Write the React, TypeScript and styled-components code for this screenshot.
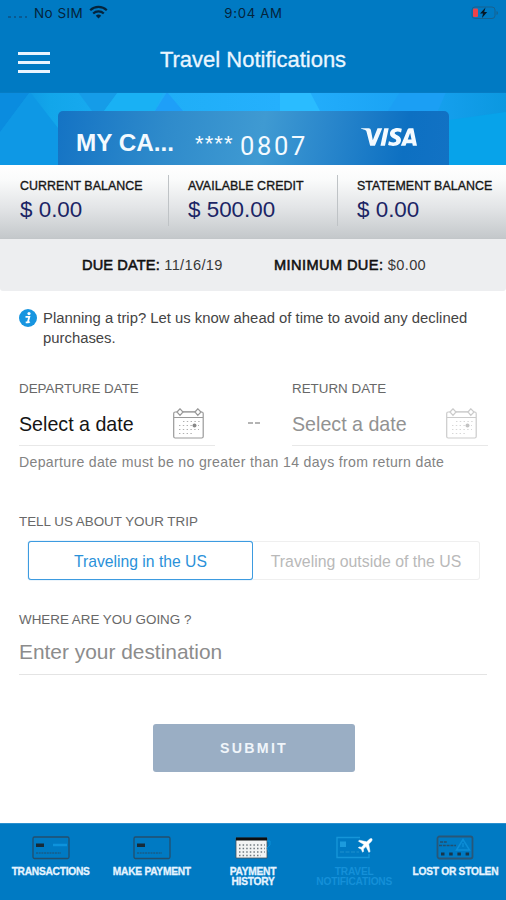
import React from 'react';
import styled, { createGlobalStyle } from 'styled-components';
import { SiVisa } from 'react-icons/si';

const GlobalStyle = createGlobalStyle`
  * { box-sizing: border-box; }
  body { margin: 0; background: #fff; font-family: "Liberation Sans", Arial, sans-serif; }
  button, input { font-family: inherit; }
`;

const Screen = styled.main`
  display: flex;
  flex-direction: column;
  width: 506px;
  height: 900px;
  overflow: hidden;
  background: #fff;
`;

const StatusBar = styled.div`
  display: grid;
  grid-template-columns: 1fr auto 1fr;
  align-items: center;
  height: 26px;
  flex: none;
  padding: 0 7px 0 8px;
  background: #007ac3;
  color: #04243c;
  font-family: Inter, sans-serif;
  font-size: 13px;
`;

const Carrier = styled.div`
  display: flex;
  align-items: center;
  font-size: 13.5px;
  letter-spacing: 0.45px;
  svg { margin-left: 6px; margin-top: -2px; }
`;

const Signal = styled.span`
  display: flex;
  gap: 3px;
  width: 26px;
  padding-top: 7px;
  i { width: 2.5px; height: 2px; background: #0a5a92; }
`;

const Clock = styled.div`
  font-size: 13.2px;
  letter-spacing: 0.7px;
`;

const Battery = styled.div`
  display: flex;
  justify-content: flex-end;
`;

const Header = styled.header`
  display: grid;
  grid-template-columns: 60px 1fr 60px;
  align-items: center;
  height: 66px;
  flex: none;
  background: #007ac3;
`;

const MenuButton = styled.button`
  display: flex;
  flex-direction: column;
  gap: 6px;
  width: 32px;
  margin: 6px 0 0 18px;
  padding: 0;
  border: 0;
  background: none;
  span { height: 3px; background: #e9f5ff; }
`;

const Title = styled.h1`
  margin: 1px 0 0;
  color: #eaf6ff;
  font-size: 22px;
  font-weight: 400;
  text-align: center;
  -webkit-text-stroke: 0.3px #eaf6ff;
`;

const Banner = styled.section`
  display: grid;
  height: 73px;
  flex: none;
  overflow: hidden;
  > * { grid-area: 1 / 1; }
`;

const CardTile = styled.div`
  display: flex;
  width: 391px;
  height: 54px;
  margin: 19px 0 0 58px;
  padding-left: 18px;
  border-radius: 5px 5px 0 0;
  background: linear-gradient(100deg, #1473c4 0%, #2f8bcb 28%, #3f9ad2 52%, #2a87cc 68%, #0d70c2 88%, #1272c4 100%);
  color: #f3faff;
`;

const CardName = styled.div`
  width: 119px;
  padding-top: 18px;
  font-size: 24.3px;
  font-weight: 700;
  line-height: 28px;
`;

const Mask = styled.div`
  width: 45px;
  padding-top: 19px;
  font-size: 22px;
  line-height: 28px;
  letter-spacing: 1.1px;
`;

const Digits = styled.div`
  width: 121px;
  padding-top: 21px;
  font-family: Roboto, sans-serif;
  font-size: 25.5px;
  line-height: 28px;
  letter-spacing: 2.7px;
`;

const VisaMark = styled(SiVisa)`
  width: 56px;
  height: 56px;
  margin-top: -2px;
`;

const Balances = styled.section`
  display: grid;
  grid-template-columns: 168px 169px 169px;
  height: 74px;
  flex: none;
  border-bottom: 1px solid #c2c6c9;
  background: linear-gradient(#fff 0%, #fafbfb 20%, #e3e5e7 58%, #c4c8cb 100%);
`;

const Balance = styled.div`
  position: relative;
  padding: 13px 0 0 20px;
  white-space: nowrap;
  & + &::before {
    content: '';
    position: absolute;
    left: 0;
    top: 10px;
    width: 1px;
    height: 51px;
    background: #bfc3c6;
  }
`;

const BalanceLabel = styled.div`
  color: #161616;
  font-size: 12.4px;
  line-height: 16px;
  letter-spacing: 0.07px;
  -webkit-text-stroke: 0.35px #161616;
`;

const Amount = styled.div`
  color: #1b2565;
  font-size: 22.4px;
  line-height: 31px;
`;

const DueBar = styled.section`
  display: flex;
  align-items: center;
  height: 52px;
  flex: none;
  padding-left: 82px;
  border-radius: 0 0 3px 3px;
  background: #edeef0;
  color: #383838;
  font-size: 14.6px;
`;

const DueItem = styled.div<{ $spacing: number }>`
  width: 192px;
  white-space: nowrap;
  letter-spacing: 0.35px;
  b {
    color: #101010;
    font-weight: 400;
    letter-spacing: ${p => p.$spacing}px;
    -webkit-text-stroke: 0.55px #101010;
  }
`;

const Form = styled.form`
  display: flex;
  flex-direction: column;
  flex: 1;
  padding: 17px 19px 0;
`;

const Notice = styled.div`
  display: flex;
  height: 40px;
  color: #444;
  font-size: 14.85px;
  line-height: 20px;
  white-space: nowrap;
  svg { margin: 1px 6px 0 0; }
`;

const Dates = styled.div`
  display: grid;
  grid-template-columns: 196px 77px 196px;
  margin-top: 32px;
`;

const Label = styled.div`
  color: #686868;
  font-size: 13.4px;
  line-height: 17px;
`;

const DateField = styled.div<{ $muted?: boolean }>`
  display: flex;
  align-items: center;
  justify-content: space-between;
  height: 49px;
  padding: 7px 11px 0 0;
  border-bottom: 1px solid #e8e8e8;
  color: ${p => (p.$muted ? '#929292' : '#151515')};
  font-size: 19.65px;
  svg { margin-top: -2px; opacity: ${p => (p.$muted ? 0.5 : 1)}; }
`;

const Dash = styled.div`
  display: flex;
  justify-content: center;
  gap: 2px;
  padding-top: 42px;
  i { width: 5px; height: 2px; background: #b4b4b4; }
`;

const Hint = styled.div`
  height: 67px;
  padding-top: 8px;
  color: #838383;
  font-size: 14.1px;
  line-height: 16px;
  letter-spacing: 0.32px;
  white-space: nowrap;
`;

const Segments = styled.div`
  display: grid;
  grid-template-columns: 225px 227px;
  height: 39px;
  margin: 11px 0 31px 9px;
`;

const Segment = styled.button<{ $active?: boolean }>`
  padding: 2px 0 0;
  border: 1px solid ${p => (p.$active ? '#3d9be0' : '#efefef')};
  border-left-width: ${p => (p.$active ? 1 : 0)}px;
  border-radius: ${p => (p.$active ? '3px' : '0 3px 3px 0')};
  background: #fff;
  color: ${p => (p.$active ? '#2a91d9' : '#b9b9b9')};
  font-size: ${p => (p.$active ? 15.7 : 15.85)}px;
  white-space: nowrap;
  box-shadow: ${p => (p.$active ? '0 0 1px #3d9be0' : 'none')};
`;

const Destination = styled.input`
  height: 47px;
  padding: 2px 0 0;
  border: 0;
  border-bottom: 1px solid #e4e4e4;
  border-radius: 0;
  outline: 0;
  font-size: 20.9px;
  &::placeholder { color: #8c8c8c; opacity: 1; }
`;

const Submit = styled.button`
  align-self: center;
  width: 202px;
  height: 48px;
  margin: 49px 0 0 2px;
  padding: 0;
  border: 0;
  border-radius: 3px;
  background: #9aaec4;
  color: #f0f5fa;
  font-size: 14.2px;
  font-weight: 700;
  letter-spacing: 2.3px;
`;

const Nav = styled.nav`
  display: grid;
  grid-template-columns: repeat(5, 1fr);
  height: 77px;
  flex: none;
  border-top: 1px solid #2a90cf;
  background: #007ac3;
`;

const NavItem = styled.a<{ $active?: boolean }>`
  display: flex;
  flex-direction: column;
  align-items: center;
  padding-top: 11px;
  color: ${p => (p.$active ? '#1590d8' : '#e6f4ff')};
  font-size: 10.2px;
  font-weight: 700;
  line-height: 10px;
  text-align: center;
  white-space: pre-line;
  letter-spacing: ${p => (p.$active ? -0.2 : -0.25)}px;
  -webkit-text-stroke: ${p => (p.$active ? 0 : 0.3)}px #e6f4ff;
  svg { margin-bottom: 7px; flex: none; }
`;

const WifiIcon = () => (
  <svg width="19" height="14" viewBox="0 0 19 14" fill="none" stroke="#04243c" strokeWidth="2.2">
    <path d="M1.2 5.2a11.8 11.8 0 0 1 16.6 0" />
    <path d="M4.2 8.5a7.6 7.6 0 0 1 10.6 0" />
    <path d="M9.5 13.6 6.8 10.8a4 4 0 0 1 5.4 0Z" fill="#04243c" stroke="none" />
  </svg>
);

const BatteryIcon = () => (
  <svg width="30" height="14" viewBox="0 0 30 14">
    <rect x="3" y="1" width="23" height="11.5" rx="3" fill="none" stroke="#17618f" />
    <rect x="4" y="2.5" width="5" height="8.5" rx="1" fill="#ee4349" />
    <path d="M16.5 1.5 11 7.5h3l-1 4.5 5.2-6h-3Z" fill="#051827" />
    <path d="M27.5 5v4q1.5-.7 1.5-2T27.5 5" fill="#17618f" />
  </svg>
);

const Facets = () => (
  <svg width="506" height="73" viewBox="0 0 506 73" preserveAspectRatio="none">
    <defs>
      <linearGradient id="sky" x1="0" x2="1">
        <stop offset="0" stopColor="#0e8de0" />
        <stop offset=".1" stopColor="#12a6ea" />
        <stop offset=".3" stopColor="#1eaef6" />
        <stop offset=".55" stopColor="#25b0fd" />
        <stop offset=".8" stopColor="#1aa3f4" />
        <stop offset="1" stopColor="#0b98e0" />
      </linearGradient>
    </defs>
    <rect width="506" height="73" fill="url(#sky)" />
    <path d="M0 0h30L9 28 0 40Z" fill="#0a8cdf" />
    <path d="M30 0 58 36V73H0V40L9 28Z" fill="#0e98e5" />
    <path d="M78 0h40L104 19H92Z" fill="#159ce8" />
    <path d="M118 0h45l-8 19h-51Z" fill="#19b1f4" />
    <path d="M167 0 155 19h28Z" fill="#1e9ff8" />
    <path d="M280 0h30l10 19h-40Z" fill="#2abcff" />
    <path d="M400 0 388 19h50L446 0Z" fill="#1b9ff4" />
    <path d="m449 28 57-8v53h-57Z" fill="#07a3ea" />
    <rect width="506" height="1" fill="#067cc4" />
  </svg>
);

const InfoIcon = () => (
  <svg width="18" height="18" viewBox="0 0 18 18">
    <circle cx="9" cy="9" r="9" fill="#1795e0" />
    <circle cx="10" cy="4.6" r="1.6" fill="#fff" />
    <path d="M6.5 7.8h3.8L8.8 13.4q1 .1 1.9-.8M6.7 13.4h2.1" fill="none" stroke="#fff" strokeWidth="1.8" />
  </svg>
);

const CalendarIcon = () => (
  <svg width="31" height="31" viewBox="0 0 31 31" fill="none" stroke="#999">
    <rect x=".7" y="4" width="29.5" height="26" rx="1.5" strokeWidth="1.2" />
    <path d="M1 9.5h29M9 3.8h14" strokeWidth="1.1" />
    <path d="M4 4 7 .8l3 3.2-3 3.4ZM22 4l2.8-3.2L28 4l-3.2 3.4Z" fill="#fff" strokeWidth="1.2" />
    <path d="M10 13.5h18M6 17.5h20M6 21.5h20M6 25.5h13" strokeWidth="1.2" strokeDasharray="1.4 2.4" stroke="#b0b0b0" />
    <circle cx="21.5" cy="17.5" r="2" fill="#888" stroke="none" />
  </svg>
);

const dark = '#234f6d';

const CardIcon = ({ stripe }: { stripe?: boolean }) => (
  <svg width="38" height="25" viewBox="0 0 38 25" fill="none">
    <rect x="1" y="2" width="36" height="21.5" rx="1.5" stroke={dark} strokeWidth="1.3" />
    <rect x="4" y="8.5" width="8" height="3.5" fill="#172b38" />
    {stripe && <path d="M21 10h14" stroke="#0d93dc" strokeWidth="2.5" />}
    <path d="M4 18h25" stroke={dark} strokeDasharray="2 .7" />
  </svg>
);

const HistoryIcon = () => (
  <svg width="38" height="25" viewBox="0 0 38 25">
    <path d="M2 3h31v20H2Z" fill="#f2f4f4" stroke="#46545c" strokeWidth=".8" />
    <path d="M2 2.5h31v3H2Z" fill="#0b0e10" />
    <path d="M5 10h26M5 13.5h26M5 17h26M5 20.5h22" stroke="#6f797f" strokeWidth="1.5" strokeDasharray="1.5 2.1" />
    <path d="M33 6h3v4l-3 3 2 4" stroke="#0a8fda" fill="none" />
  </svg>
);

const TravelIcon = () => (
  <svg width="38" height="25" viewBox="0 0 38 25" fill="none">
    <path d="M25 2.5H2v20h32V19" stroke="#1595d8" strokeWidth="1.4" />
    <rect x="5" y="6.5" width="6" height="5.5" fill="#1c9bdd" />
    <path d="M5 17h19" stroke="#1489ca" strokeWidth="1.6" strokeDasharray="4 1.5" />
    <path d="M37 3.8q-1.3-.7-2.6.5l-2.7 2.5-7.3-1.6-1 1 5.6 3.4-2.5 2.6-2.4-.3-.8.8 3 1.5 1.3 3 1-.8-.2-2.3 2.6-2.5 3 5.8 1-1-1.3-7.4 2.7-2.6Q37.6 5 37 3.8Z" fill="#fff" stroke="#fff" strokeWidth=".5" />
  </svg>
);

const LostIcon = () => (
  <svg width="38" height="25" viewBox="0 0 38 25" fill="none">
    <rect x="1.5" y="1.5" width="35" height="22" rx="2" stroke="#285778" strokeWidth="1.8" />
    <path d="M27 4.5 20.5 15h13ZM27 8v4" stroke="#0c8dd6" strokeWidth="1.5" />
    <path d="M4 7h7M3 10.5h17" stroke={dark} strokeWidth="1.3" strokeDasharray="3 .8" />
    <path d="M5 19h29" stroke="#17364b" strokeWidth="3" strokeDasharray="3.5 4.7" />
  </svg>
);

const balances = [
  { label: 'CURRENT BALANCE', amount: '$ 0.00' },
  { label: 'AVAILABLE CREDIT', amount: '$ 500.00' },
  { label: 'STATEMENT BALANCE', amount: '$ 0.00' },
];

export default function App() {
  return (
    <>
      <GlobalStyle />
      <Screen>
        <StatusBar>
          <Carrier><Signal><i /><i /><i /><i /></Signal>No SIM<WifiIcon /></Carrier>
          <Clock>9:04 AM</Clock>
          <Battery><BatteryIcon /></Battery>
        </StatusBar>
        <Header>
          <MenuButton type="button" aria-label="Menu"><span /><span /><span /></MenuButton>
          <Title>Travel Notifications</Title>
        </Header>
        <Banner>
          <Facets />
          <CardTile>
            <CardName>MY CA...</CardName>
            <Mask>****</Mask>
            <Digits>0807</Digits>
            <VisaMark />
          </CardTile>
        </Banner>
        <Balances>
          {balances.map(b => (
            <Balance key={b.label}>
              <BalanceLabel>{b.label}</BalanceLabel>
              <Amount>{b.amount}</Amount>
            </Balance>
          ))}
        </Balances>
        <DueBar>
          <DueItem $spacing={0.12}><b>DUE DATE:</b> 11/16/19</DueItem>
          <DueItem $spacing={0.4}><b>MINIMUM DUE:</b> $0.00</DueItem>
        </DueBar>
        <Form>
          <Notice>
            <InfoIcon />
            <div>Planning a trip? Let us know ahead of time to avoid any declined<br />purchases.</div>
          </Notice>
          <Dates>
            <div>
              <Label>DEPARTURE DATE</Label>
              <DateField>Select a date<CalendarIcon /></DateField>
            </div>
            <Dash><i /><i /></Dash>
            <div>
              <Label>RETURN DATE</Label>
              <DateField $muted>Select a date<CalendarIcon /></DateField>
            </div>
          </Dates>
          <Hint>Departure date must be no greater than 14 days from return date</Hint>
          <Label>TELL US ABOUT YOUR TRIP</Label>
          <Segments>
            <Segment type="button" $active>Traveling in the US</Segment>
            <Segment type="button">Traveling outside of the US</Segment>
          </Segments>
          <Label>WHERE ARE YOU GOING ?</Label>
          <Destination placeholder="Enter your destination" />
          <Submit type="button">SUBMIT</Submit>
        </Form>
        <Nav>
          <NavItem><CardIcon stripe />TRANSACTIONS</NavItem>
          <NavItem><CardIcon />MAKE PAYMENT</NavItem>
          <NavItem><HistoryIcon />{'PAYMENT\nHISTORY'}</NavItem>
          <NavItem $active><TravelIcon />{'TRAVEL\nNOTIFICATIONS'}</NavItem>
          <NavItem><LostIcon />LOST OR STOLEN</NavItem>
        </Nav>
      </Screen>
    </>
  );
}
